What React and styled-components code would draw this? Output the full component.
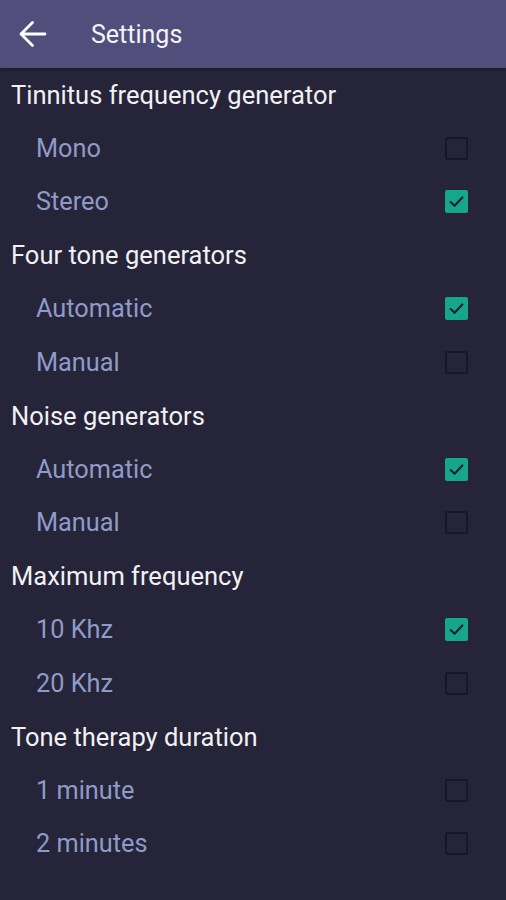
import React from "react";
import styled, { createGlobalStyle } from "styled-components";

const Global = createGlobalStyle`
  html, body { margin: 0; padding: 0; background: #262439; }
  body { font-family: Roboto, "Noto Sans", sans-serif; }
`;

const Page = styled.div`
  width: 506px;
  min-height: 900px;
  background: #262439;
  display: flex;
  flex-direction: column;
`;

const Header = styled.header`
  height: 68px;
  background: #514e7c;
  display: flex;
  align-items: center;
  padding-left: 19px;
  box-sizing: border-box;
  box-shadow: 0 2px 3px rgba(0, 0, 0, 0.25);
`;

const Back = styled.button`
  width: 28px;
  height: 28px;
  padding: 0;
  border: 0;
  background: transparent;
  display: flex;
  align-items: center;
  justify-content: center;
  margin-right: 44px;
`;

const Title = styled.h1`
  margin: 0;
  font-size: 25px;
  font-weight: 400;
  color: #f4f4f8;
`;

const List = styled.div`
  display: flex;
  flex-direction: column;
`;

const SectionTitle = styled.div`
  height: 53.5px;
  display: flex;
  align-items: center;
  padding-left: 11px;
  font-size: 25.5px;
  color: #f1f1f4;
`;

const Row = styled.label`
  height: 53.5px;
  display: flex;
  align-items: center;
  justify-content: space-between;
  padding-left: 36px;
  padding-right: 38px;
  font-size: 25.3px;
  color: #8e9bc8;
`;

const Box = styled.span`
  width: 23px;
  height: 23px;
  box-sizing: border-box;
  border-radius: 2px;
  display: flex;
  align-items: center;
  justify-content: center;
  background: ${(p) => (p.$checked ? "#16a68c" : "transparent")};
  border: ${(p) => (p.$checked ? "none" : "2px solid #17162a")};
`;

const sections = [
  {
    title: "Tinnitus frequency generator",
    options: [
      ["Mono", false],
      ["Stereo", true],
    ],
  },
  {
    title: "Four tone generators",
    options: [
      ["Automatic", true],
      ["Manual", false],
    ],
  },
  {
    title: "Noise generators",
    options: [
      ["Automatic", true],
      ["Manual", false],
    ],
  },
  {
    title: "Maximum frequency",
    options: [
      ["10 Khz", true],
      ["20 Khz", false],
    ],
  },
  {
    title: "Tone therapy duration",
    options: [
      ["1 minute", false],
      ["2 minutes", false],
    ],
  },
];

const Check = ({ checked }) => (
  <Box $checked={checked}>
    {checked && (
      <svg width="17" height="17" viewBox="0 0 16 16">
        <path d="M2.5 8.5 L6.2 12 L13.5 4.2" fill="none" stroke="#1d2034" strokeWidth="2" strokeLinecap="round" strokeLinejoin="round" />
      </svg>
    )}
  </Box>
);

export default function App() {
  return (
    <>
      <Global />
      <Page>
        <Header>
          <Back aria-label="Back">
            <svg width="28" height="28" viewBox="0 0 28 28">
              <path d="M2 14 H26 M13.5 2.5 L2 14 L13.5 25.5" fill="none" stroke="#ffffff" strokeWidth="2.8" strokeLinecap="round" strokeLinejoin="round" />
            </svg>
          </Back>
          <Title>Settings</Title>
        </Header>
        <List>
          {sections.map((s) => (
            <React.Fragment key={s.title}>
              <SectionTitle>{s.title}</SectionTitle>
              {s.options.map(([label, checked]) => (
                <Row key={label}>
                  <span>{label}</span>
                  <Check checked={checked} />
                </Row>
              ))}
            </React.Fragment>
          ))}
        </List>
      </Page>
    </>
  );
}
